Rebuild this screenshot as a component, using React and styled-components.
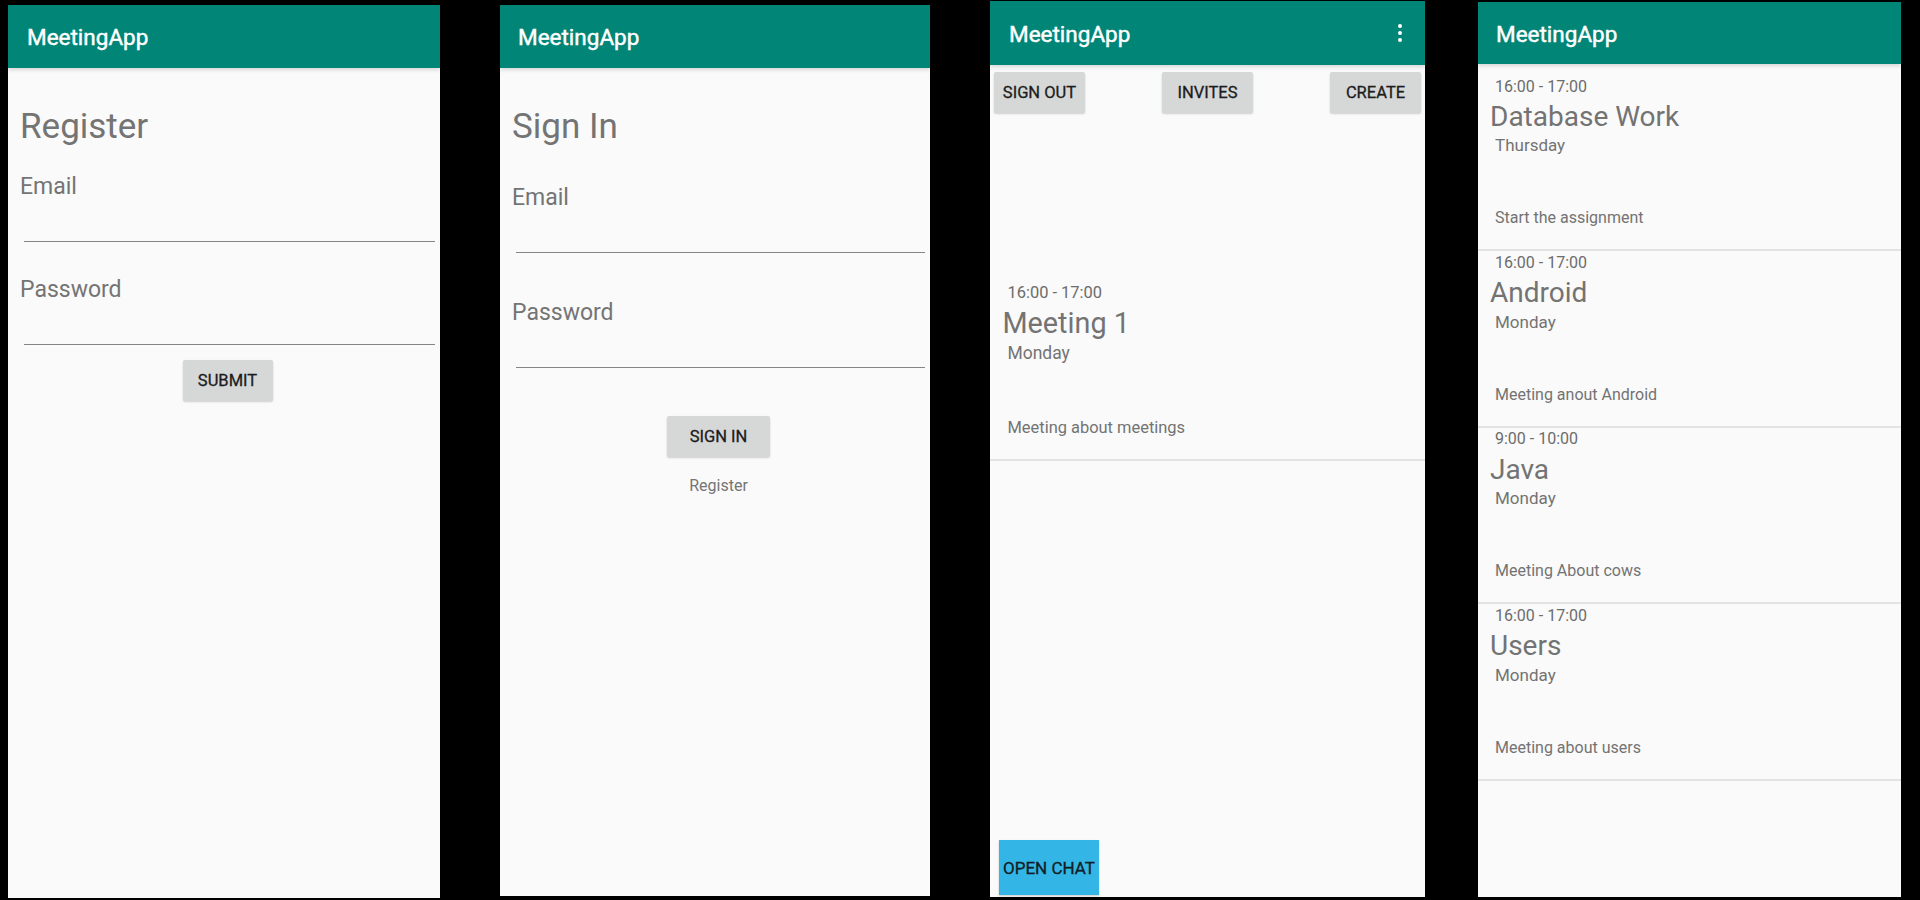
import React from "react";
import styled, { createGlobalStyle } from "styled-components";

const GlobalStyle = createGlobalStyle`
  body {
    margin: 0;
    background: #000;
    font-family: Roboto, "Liberation Sans", sans-serif;
  }
`;

const meetings = [
  { time: "16:00 - 17:00", title: "Database Work", day: "Thursday", desc: "Start the assignment" },
  { time: "16:00 - 17:00", title: "Android", day: "Monday", desc: "Meeting anout Android" },
  { time: "9:00 - 10:00", title: "Java", day: "Monday", desc: "Meeting About cows" },
  { time: "16:00 - 17:00", title: "Users", day: "Monday", desc: "Meeting about users" },
];

const Kebab = () => (
  <svg width="4" height="18" viewBox="0 0 4 18">
    <circle cx="2" cy="2" r="2" fill="#fff" />
    <circle cx="2" cy="9" r="2" fill="#fff" />
    <circle cx="2" cy="16" r="2" fill="#fff" />
  </svg>
);

const MeetingCard = ({ meeting, s = 1, mt = 0 }) => (
  <StCard $s={s} $mt={mt}>
    <StTime $s={s}>{meeting.time}</StTime>
    <StCardTitle $s={s}>{meeting.title}</StCardTitle>
    <StDay $s={s}>{meeting.day}</StDay>
    <StDesc $s={s}>{meeting.desc}</StDesc>
  </StCard>
);

const App = () => {
  return (
    <StStage>
      <GlobalStyle />

      {/* register */}
      <StPhone $ml={8} $w={432} $top={5} $h={893}>
        <StAppBar $h={63} $pl={19}>
          <StAppTitle>MeetingApp</StAppTitle>
        </StAppBar>
        <StForm>
          <StHeading $mt={39}>Register</StHeading>
          <StLabel $mt={26}>Email</StLabel>
          <StField type="email" $h={41} />
          <StLabel $mt={35}>Password</StLabel>
          <StField type="password" $h={41} />
          <StButton $center $w={90} $mt={15}>
            SUBMIT
          </StButton>
        </StForm>
      </StPhone>

      {/* sign in */}
      <StPhone $ml={60} $w={430} $top={5} $h={891}>
        <StAppBar $h={63} $pl={18}>
          <StAppTitle>MeetingApp</StAppTitle>
        </StAppBar>
        <StForm>
          <StHeading $mt={39}>Sign In</StHeading>
          <StLabel $mt={37}>Email</StLabel>
          <StField type="email" $h={41} />
          <StLabel $mt={47}>Password</StLabel>
          <StField type="password" $h={41} />
          <StButton $center $w={103} $mt={48}>
            SIGN IN
          </StButton>
          <StLink>Register</StLink>
        </StForm>
      </StPhone>

      {/* main */}
      <StPhone $ml={60} $w={435} $top={1} $h={896}>
        <StAppBar $h={64} $pl={19} $pr={23}>
          <StAppTitle>MeetingApp</StAppTitle>
          <Kebab />
        </StAppBar>
        <StButtonRow>
          <StButton $w={91}>SIGN OUT</StButton>
          <StButton $w={91}>INVITES</StButton>
          <StButton $w={91}>CREATE</StButton>
        </StButtonRow>
        <MeetingCard
          s={1.028}
          mt={167}
          meeting={{
            time: "16:00 - 17:00",
            title: "Meeting 1",
            day: "Monday",
            desc: "Meeting about meetings",
          }}
        />
        <StChatButton>OPEN CHAT</StChatButton>
      </StPhone>

      {/* list */}
      <StPhone $ml={53} $w={423} $top={2} $h={895}>
        <StAppBar $h={62} $pl={18}>
          <StAppTitle>MeetingApp</StAppTitle>
        </StAppBar>
        <StList>
          {meetings.map((m, i) => (
            <MeetingCard key={i} meeting={m} />
          ))}
        </StList>
      </StPhone>
    </StStage>
  );
};

const StStage = styled.div`
  display: flex;
  align-items: flex-start;
  width: 1920px;
  height: 900px;
  overflow: hidden;
  background: #000;
`;

const StPhone = styled.div`
  flex: none;
  display: flex;
  flex-direction: column;
  width: ${(p) => p.$w}px;
  height: ${(p) => p.$h}px;
  margin-top: ${(p) => p.$top}px;
  margin-left: ${(p) => p.$ml}px;
  background: #fafafa;
  overflow: hidden;
`;

const StAppBar = styled.div`
  flex: none;
  position: relative;
  z-index: 1;
  display: flex;
  align-items: center;
  justify-content: space-between;
  height: ${(p) => p.$h}px;
  padding: 0 ${(p) => p.$pr || 0}px 0 ${(p) => p.$pl}px;
  background: #008577;
  box-shadow: 0 2px 4px rgba(0, 0, 0, 0.14);
`;

const StAppTitle = styled.span`
  padding-top: 2px;
  color: #fff;
  font-family: Roboto, "Liberation Sans", sans-serif;
  font-size: 22.5px;
  font-weight: 400;
  -webkit-text-stroke: 0.45px #fff;
  line-height: 1.17;
`;

const StForm = styled.div`
  display: flex;
  flex-direction: column;
  padding: 0 5px 0 12px;
`;

const StHeading = styled.h1`
  margin: ${(p) => p.$mt}px 0 0;
  font-size: 35px;
  font-weight: 400;
  line-height: 1.17;
  color: #747474;
`;

const StLabel = styled.label`
  margin-top: ${(p) => p.$mt}px;
  font-size: 23px;
  line-height: 1.17;
  color: #747474;
`;

const StField = styled.input`
  box-sizing: border-box;
  height: ${(p) => p.$h}px;
  margin: 0 0 0 4px;
  padding: 0;
  border: 0;
  border-bottom: 1px solid #858585;
  background: transparent;
  outline: none;
`;

const StButton = styled.button`
  flex: none;
  align-self: ${(p) => (p.$center ? "center" : "auto")};
  width: ${(p) => p.$w}px;
  height: 41px;
  margin-top: ${(p) => p.$mt || 0}px;
  padding: 0;
  border: 0;
  border-radius: 2px;
  background: #d6d7d7;
  box-shadow: 0 1px 2px rgba(0, 0, 0, 0.18);
  color: #1c1c1c;
  font-family: Roboto, "Liberation Sans", sans-serif;
  font-size: 16.5px;
  font-weight: 400;
  -webkit-text-stroke: 0.3px #1c1c1c;
`;

const StLink = styled.div`
  align-self: center;
  margin-top: 20px;
  font-size: 16px;
  line-height: 1.17;
  color: #757575;
`;

const StButtonRow = styled.div`
  display: flex;
  justify-content: space-between;
  padding: 7px 4px 0;
`;

const StList = styled.div`
  display: flex;
  flex-direction: column;
  padding-top: 11px;
`;

const StCard = styled.div`
  display: flex;
  flex-direction: column;
  margin-top: ${(p) => p.$mt}px;
  padding-left: ${(p) => 17 * p.$s}px;
  border-bottom: 2px solid #e3e3e3;
  color: #737373;
  line-height: 1.17;
`;

const StTime = styled.div`
  margin-top: ${(p) => 2.5 * p.$s}px;
  font-size: ${(p) => 16 * p.$s}px;
  color: #6c6c6c;
`;

const StCardTitle = styled.div`
  margin: ${(p) => 4.7 * p.$s}px 0 0 -5px;
  font-size: ${(p) => 28 * p.$s}px;
`;

const StDay = styled.div`
  margin-top: ${(p) => 2.7 * p.$s}px;
  font-size: ${(p) => 17 * p.$s}px;
`;

const StDesc = styled.div`
  margin: ${(p) => 53.2 * p.$s}px 0 ${(p) => 21.3 * p.$s}px;
  font-size: ${(p) => 16 * p.$s}px;
`;

const StChatButton = styled.button`
  align-self: flex-start;
  width: 100px;
  height: 55px;
  margin: auto 0 2px 9px;
  padding: 0;
  border: 0;
  background: #33b5e5;
  box-shadow: 0 1px 2px rgba(0, 0, 0, 0.2);
  color: #111c24;
  font-family: Roboto, "Liberation Sans", sans-serif;
  font-size: 17px;
  font-weight: 400;
  -webkit-text-stroke: 0.3px #111c24;
`;

export default App;
